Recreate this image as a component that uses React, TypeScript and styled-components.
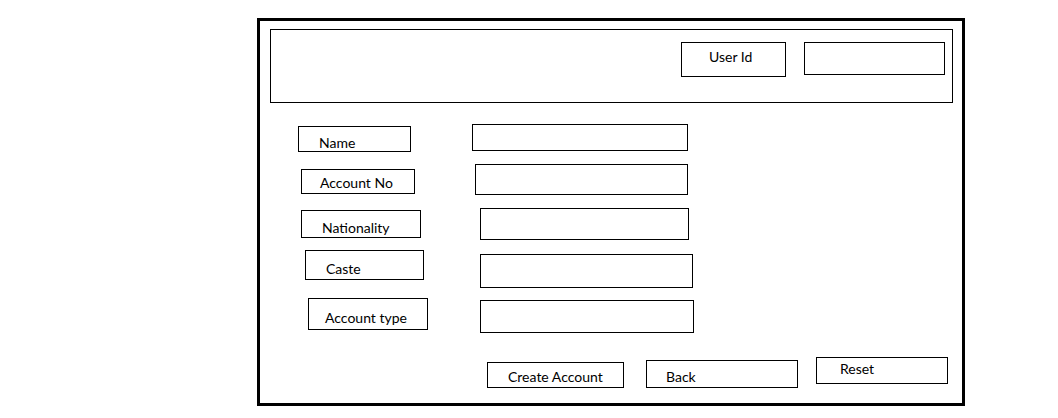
import React from "react";
import styled, { createGlobalStyle } from "styled-components";

const GlobalStyle = createGlobalStyle`
  html, body {
    margin: 0;
    padding: 0;
    background: #ffffff;
  }
  body {
    font-family: Lato, "Open Sans", sans-serif;
    color: #000000;
  }
`;

const Frame = styled.div`
  box-sizing: border-box;
  margin: 18px 0 0 257px;
  width: 708px;
  height: 388px;
  border: 3px solid #000;
  padding: 8px 0 0 10px;
  display: flex;
  flex-direction: column;
`;

const Header = styled.div`
  box-sizing: border-box;
  width: 683px;
  height: 74px;
  border: 1px solid #000;
  display: flex;
  justify-content: flex-end;
  align-items: flex-start;
  gap: 18px;
  padding: 12px 7px 0 0;
`;

type BoxProps = {
  $w: number;
  $h: number;
  $ml?: number;
  $mt?: number;
  $pl?: number;
  $pt?: number;
};

const LINE = 16;

const Caption = styled.span`
  display: block;
  font-family: Lato, "Open Sans", sans-serif;
  font-size: 14px;
  line-height: ${LINE}px;
  color: #000;
  white-space: nowrap;
`;

const LabelBox = styled.label<BoxProps>`
  box-sizing: border-box;
  display: block;
  flex: none;
  width: ${(p) => p.$w}px;
  height: ${(p) => p.$h}px;
  margin-left: ${(p) => p.$ml ?? 0}px;
  margin-top: ${(p) => p.$mt ?? 0}px;
  padding: ${(p) => p.$pt ?? 0}px 0 0 ${(p) => p.$pl ?? 0}px;
  border: 1px solid #000;
  background: #fff;
`;

const Field = styled.input<BoxProps>`
  box-sizing: border-box;
  flex: none;
  appearance: none;
  width: ${(p) => p.$w}px;
  height: ${(p) => p.$h}px;
  margin: ${(p) => p.$mt ?? 0}px 0 0 ${(p) => p.$ml ?? 0}px;
  padding: 0;
  border: 1px solid #000;
  border-radius: 0;
  background: #fff;
  outline: none;
`;

const ActionButton = styled.button<BoxProps>`
  box-sizing: border-box;
  flex: none;
  appearance: none;
  display: block;
  text-align: left;
  width: ${(p) => p.$w}px;
  height: ${(p) => p.$h}px;
  margin: ${(p) => p.$mt ?? 0}px 0 0 ${(p) => p.$ml ?? 0}px;
  padding: ${(p) => p.$pt ?? 0}px 0
    ${(p) => Math.max(0, p.$h - 2 - (p.$pt ?? 0) - LINE)}px
    ${(p) => p.$pl ?? 0}px;
  border: 1px solid #000;
  border-radius: 0;
  background: #fff;
  cursor: pointer;
`;

const Row = styled.div<{ $mt: number }>`
  display: flex;
  align-items: flex-start;
  margin-top: ${(p) => p.$mt}px;
`;

type FieldRow = {
  label: string;
  rowMt: number;
  lab: BoxProps;
  inp: BoxProps;
};

const rows: FieldRow[] = [
  {
    label: "Name",
    rowMt: 21,
    lab: { $w: 113, $h: 26, $ml: 28, $mt: 2, $pl: 20, $pt: 8 },
    inp: { $w: 216, $h: 27, $ml: 61, $mt: 0 },
  },
  {
    label: "Account No",
    rowMt: 12,
    lab: { $w: 114, $h: 25, $ml: 31, $mt: 5, $pl: 18, $pt: 5 },
    inp: { $w: 213, $h: 31, $ml: 60, $mt: 0 },
  },
  {
    label: "Nationality",
    rowMt: 13,
    lab: { $w: 120, $h: 28, $ml: 31, $mt: 2, $pl: 20, $pt: 9 },
    inp: { $w: 209, $h: 32, $ml: 59, $mt: 0 },
  },
  {
    label: "Caste",
    rowMt: 10,
    lab: { $w: 119, $h: 30, $ml: 35, $mt: 0, $pl: 20, $pt: 10 },
    inp: { $w: 213, $h: 34, $ml: 56, $mt: 4 },
  },
  {
    label: "Account type",
    rowMt: 10,
    lab: { $w: 120, $h: 32, $ml: 38, $mt: 0, $pl: 16, $pt: 11 },
    inp: { $w: 214, $h: 33, $ml: 52, $mt: 2 },
  },
];

const buttons: { text: string; box: BoxProps }[] = [
  { text: "Create Account", box: { $w: 137, $h: 26, $ml: 217, $mt: 5, $pl: 20, $pt: 6 } },
  { text: "Back", box: { $w: 152, $h: 28, $ml: 22, $mt: 3, $pl: 19, $pt: 8 } },
  { text: "Reset", box: { $w: 132, $h: 27, $ml: 18, $mt: 0, $pl: 23, $pt: 3 } },
];

export default function App() {
  return (
    <>
      <GlobalStyle />
      <Frame>
        <Header>
          <LabelBox $w={105} $h={35} $pl={27} $pt={6}>
            <Caption>User Id</Caption>
          </LabelBox>
          <Field $w={141} $h={33} aria-label="User Id" />
        </Header>
        {rows.map((r) => (
          <Row key={r.label} $mt={r.rowMt}>
            <LabelBox {...r.lab}>
              <Caption>{r.label}</Caption>
            </LabelBox>
            <Field {...r.inp} aria-label={r.label} />
          </Row>
        ))}
        <Row $mt={24}>
          {buttons.map((b) => (
            <ActionButton key={b.text} type="button" {...b.box}>
              <Caption>{b.text}</Caption>
            </ActionButton>
          ))}
        </Row>
      </Frame>
    </>
  );
}
